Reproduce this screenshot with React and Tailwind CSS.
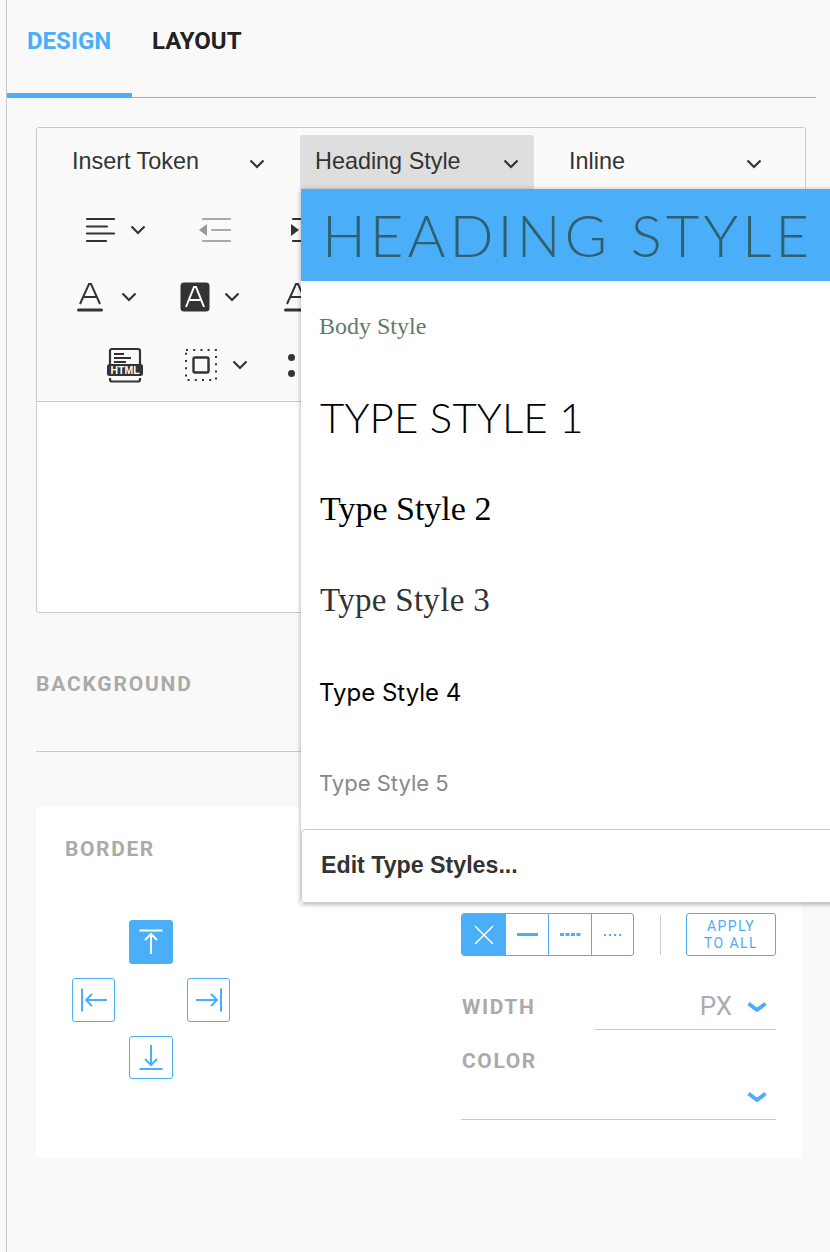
const Chevron = ({ className = '' }) => (
  <svg width="16" height="10" viewBox="0 0 16 10" fill="none" className={className}>
    <path d="M1.5 1.5 8 8l6.5-6.5" stroke="#333" strokeWidth="2.2" />
  </svg>
)

const BlueChevron = () => (
  <svg width="20" height="12" viewBox="0 0 20 12" fill="none">
    <path d="M1.500 2.500 10 9l8.500-6.500" stroke="#4aaef8" strokeWidth="4" strokeLinejoin="round" />
  </svg>
)

function Dropdown({ label, active, className = '' }) {
  return (
    <div className={`flex h-[54px] items-start justify-between rounded-t-[3px] ${active ? 'bg-[#dedede]' : ''} ${className}`}>
      <span className="mt-[10px] text-[23.4px] leading-[32px] text-[#333] font-['Liberation_Sans',sans-serif]">
        {label}
      </span>
      <Chevron className="mt-[24px]" />
    </div>
  )
}

const AlignIcon = () => (
  <svg width="30" height="26" viewBox="0 0 30 26" fill="none" stroke="#333" strokeWidth="2.2" strokeLinecap="round">
    <path d="M2 2h27M2 9.500h20M2 16.500h27M2 24h19" />
  </svg>
)

const OutdentIcon = () => (
  <svg width="34" height="26" viewBox="0 0 34 26" fill="none">
    <path d="M5 2h27M14 13h18M5 24h27" stroke="#aaa" strokeWidth="2.2" strokeLinecap="round" />
    <path d="M1 13l8-6v12z" fill="#999" />
  </svg>
)

const IndentIcon = () => (
  <svg width="34" height="26" viewBox="0 0 34 26" fill="none">
    <path d="M3 2h27M12 13h18M3 24h27" stroke="#333" strokeWidth="2.2" strokeLinecap="round" />
    <path d="M1 7l8 6-8 6z" fill="#333" />
  </svg>
)

const TextColorIcon = () => (
  <svg width="26" height="30" viewBox="0 0 26 30" fill="none" stroke="#333">
    <path d="M3 22 12 2h2l9 20M6.500 15h13" strokeWidth="2" />
    <path d="M1.500 28h23" strokeWidth="3" strokeLinecap="round" />
  </svg>
)

const HighlightIcon = () => (
  <svg width="30" height="30" viewBox="0 0 30 30" fill="none">
    <rect x="0.500" y="0.500" width="29" height="29" rx="3.500" fill="#333" />
    <path d="M6 25 14 5h2l8 20M9 18h12" stroke="#fff" strokeWidth="2" />
  </svg>
)

const HtmlIcon = () => (
  <svg width="36" height="36" viewBox="0 0 36 36" fill="none">
    <path d="M3 20V4a2 2 0 0 1 2-2h26a2 2 0 0 1 2 2v16" stroke="#333" strokeWidth="2.2" />
    <path d="M7 7h10M7 11h17M7 15h12" stroke="#333" strokeWidth="1.800" />
    <rect x="0" y="17" width="36" height="12" rx="2.500" fill="#333" />
    <path d="M3 31v1.500a2 2 0 0 0 2 2h26a2 2 0 0 0 2-2V31" stroke="#333" strokeWidth="2.200" />
    <text x="18" y="27" textAnchor="middle" fontSize="10.500" fontWeight="700" fill="#fff" fontFamily="Liberation Sans, sans-serif">HTML</text>
  </svg>
)

const BlockIcon = () => (
  <svg width="32" height="32" viewBox="0 0 32 32" fill="none">
    <rect x="1" y="1" width="30" height="30" stroke="#333" strokeWidth="2" strokeDasharray="2 5.200" />
    <rect x="8.500" y="8.500" width="15" height="15" rx="1.500" stroke="#333" strokeWidth="2.400" />
  </svg>
)

const ArrowButton = ({ d, active, className = '' }) => (
  <div className={`flex items-center justify-center rounded-[3px] border border-[#4aaef8] ${active ? 'bg-[#4aaef8]' : 'bg-white'} ${className}`}>
    <svg width="26" height="26" viewBox="0 0 26 26" fill="none" stroke={active ? '#fff' : '#4aaef8'} strokeWidth="2" className="overflow-visible">
      <path d={d} />
    </svg>
  </div>
)

const StyleRow = ({ children, className = '' }) => (
  <div className={`flex h-[91.6px] items-center pl-[19px] ${className}`}>{children}</div>
)

export default function App() {
  return (
    <div className="relative h-[1252px] w-[830px] overflow-hidden bg-[#f9f9f9] font-['Roboto',sans-serif]">
      <div className="ml-[6px] h-full border-l border-[#c9c9c9] pr-[14px]">
        {/* Tabs */}
        <div className="flex h-[98px] border-b border-[#aaa]">
          <div className="h-[98px] w-[125px] border-b-[5px] border-[#4aaef8] pl-[20px] pt-[26px] text-[24px] font-bold leading-[30px] text-[#4aaef8]">
            DESIGN
          </div>
          <div className="pl-[20px] pt-[26px] text-[24px] font-bold leading-[30px] text-[#222]">LAYOUT</div>
        </div>

        <div className="ml-[29px] mt-[29px] w-[770px]">
          {/* Editor */}
          <div className="h-[486px] w-[770px] overflow-hidden rounded-[3px] border border-[#c9c9c9] bg-white">
            <div className="h-[274px] border-b border-[#c9c9c9] bg-[#fafafa]">
              <div className="flex pl-[9px] pt-[7px]">
                <Dropdown label="Insert Token" className="w-[254px] pl-[26px] pr-[35px]" />
                <Dropdown label="Heading Style" active className="w-[234px] pl-[15px] pr-[15px]" />
                <Dropdown label="Inline" className="w-[270px] pl-[35px] pr-[42px]" />
              </div>

              <div className="mt-[28px] flex items-center pl-[48px]">
                <AlignIcon />
                <Chevron className="ml-[15px]" />
                <div className="ml-[52px]"><OutdentIcon /></div>
                <div className="ml-[58px]"><IndentIcon /></div>
              </div>

              <div className="mt-[39px] flex h-[30px] items-center pl-[40px]">
                <TextColorIcon />
                <Chevron className="ml-[18px]" />
                <div className="ml-[43px]"><HighlightIcon /></div>
                <Chevron className="ml-[14px]" />
                <div className="ml-[44px]"><TextColorIcon /></div>
              </div>

              <div className="mt-[35px] flex h-[36px] items-center pl-[70px]">
                <HtmlIcon />
                <div className="ml-[42px]"><BlockIcon /></div>
                <Chevron className="ml-[15px]" />
                <div className="ml-[40px] grid grid-cols-2 gap-x-[6px] gap-y-[9px]">
                  <span className="h-[7px] w-[7px] rounded-full bg-[#333]" />
                  <span className="h-[7px] w-[7px] rounded-full bg-[#333]" />
                  <span className="h-[7px] w-[7px] rounded-full bg-[#333]" />
                  <span className="h-[7px] w-[7px] rounded-full bg-[#333]" />
                </div>
              </div>
            </div>
          </div>

          {/* Background */}
          <div className="h-[139px] w-[766px] border-b border-[#c9c9c9] pt-[59px] text-[21px] font-bold leading-[24px] tracking-[1.8px] text-[#aaa]">
            BACKGROUND
          </div>

          {/* Border */}
          <div className="mt-[55px] h-[351px] w-[766px] bg-white pl-[29px] pt-[30px]">
            <div className="text-[21px] font-bold leading-[24px] tracking-[1.6px] text-[#aaa]">BORDER</div>
            <div className="flex">
              <div className="ml-[7px] mt-[59px] grid grid-cols-[43px_44px_43px] grid-rows-[44px_44px_43px] gap-x-[14px] gap-y-[14px]">
                <ArrowButton active className="col-start-2" d="M1.500 1.500h23M13 25V5M7 11l6-6 6 6" />
                <ArrowButton className="col-start-1 row-start-2" d="M1 1.500v23M26 13H5M11 7l-6 6 6 6" />
                <ArrowButton className="col-start-3 row-start-2" d="M25 1.500v23M0 13h21M15 7l6 6-6 6" />
                <ArrowButton className="col-start-2 row-start-3" d="M1.500 24h23M13 0v20M7 14l6 6 6-6" />
              </div>

              <div className="ml-[231px] mt-[52px] w-[315px]">
                <div className="flex items-center">
                  <div className="flex h-[43px] w-[173px] overflow-hidden rounded-[3px] border border-[#4aaef8]">
                    <div className="flex w-[44px] items-center justify-center bg-[#4aaef8]">
                      <svg width="20" height="20" viewBox="0 0 20 20" stroke="#fff" strokeWidth="1.500"><path d="M1 1l18 18M19 1 1 19" /></svg>
                    </div>
                    <div className="flex w-[43px] items-center justify-center border-r border-[#4aaef8]">
                      <span className="h-[3px] w-[21px] bg-[#4aaef8]" />
                    </div>
                    <div className="flex w-[43px] items-center justify-center border-r border-[#4aaef8]">
                      <svg width="21" height="3" viewBox="0 0 21 3"><path d="M0 1.500h21" stroke="#4aaef8" strokeWidth="3" strokeDasharray="4 1.500" /></svg>
                    </div>
                    <div className="flex flex-1 items-center justify-center">
                      <svg width="18" height="2" viewBox="0 0 18 2"><path d="M0 1h18" stroke="#4aaef8" strokeWidth="2" strokeDasharray="2 3" /></svg>
                    </div>
                  </div>
                  <div className="ml-[26px] h-[40px] w-px bg-[#ccc]" />
                  <div className="ml-[25px] flex h-[43px] w-[90px] items-center justify-center rounded-[3px] border border-[#4aaef8] text-center text-[14px] leading-[17px] tracking-[1.4px] text-[#4aaef8]">
                    APPLY<br />TO ALL
                  </div>
                </div>

                <div className="mt-[29px] flex h-[45px]">
                  <div className="w-[134px] pl-px pt-[10px] text-[21px] font-bold leading-[24px] tracking-[1.6px] text-[#aaa]">WIDTH</div>
                  <div className="flex flex-1 items-start justify-end border-b border-[#ccc] pr-[9px] pt-[4px]">
                    <span className="text-[26px] leading-[34px] text-[#a8adb5]">PX</span>
                    <span className="ml-[15px] mt-[12px]"><BlueChevron /></span>
                  </div>
                </div>

                <div className="mt-[19px] pl-px text-[21px] font-bold leading-[24px] tracking-[1.6px] text-[#aaa]">COLOR</div>
                <div className="flex h-[47px] justify-end border-b border-[#ccc] pr-[9px] pt-[18px]">
                  <BlueChevron />
                </div>
              </div>
            </div>
          </div>
        </div>
      </div>

      {/* Heading Style menu */}
      <div className="absolute left-[301px] top-[189px] w-[560px] bg-white shadow-[0_1px_5px_rgba(0,0,0,0.35)]">
        <StyleRow className="bg-[#4aaef8] pl-[21px] text-[58px] font-light tracking-[4px] text-[#2f6070] font-['Lato',sans-serif]">
          HEADING STYLE
        </StyleRow>
        <StyleRow className="text-[24px] !pl-[18px] text-[#5f7a69] font-['Liberation_Serif',serif]">Body Style</StyleRow>
        <StyleRow className="text-[42px] font-light tracking-[0.1px] text-black font-['Lato',sans-serif]">TYPE STYLE 1</StyleRow>
        <StyleRow className="pb-[2px] text-[34px] text-black font-['Liberation_Serif',serif]">Type Style 2</StyleRow>
        <StyleRow className="text-[33px] tracking-[0.3px] text-[#333] font-['Liberation_Serif',serif]">Type Style 3</StyleRow>
        <StyleRow className="!pl-[18px] text-[24px] text-black font-['Inter',sans-serif]">Type Style 4</StyleRow>
        <div className="flex h-[90px] items-center pl-[18px] text-[22px] text-[#888] font-['Inter',sans-serif]">Type Style 5</div>
        <div className="flex h-[74px] items-center rounded-[4px] border border-[#ccc] pl-[19px] text-[23.2px] font-bold text-[#333] font-['Liberation_Sans',sans-serif]">
          Edit Type Styles...
        </div>
      </div>
    </div>
  )
}
